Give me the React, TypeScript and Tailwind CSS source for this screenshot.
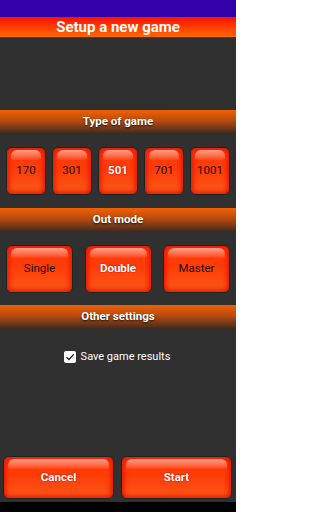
import React from 'react';

const gameTypes = ['170', '301', '501', '701', '1001'];
const outModes = ['Single', 'Double', 'Master'];

function GlossButton({
  label,
  selected,
  white,
  className,
}: {
  label: string;
  selected?: boolean;
  white?: boolean;
  className?: string;
}) {
  return (
    <button
      className={
        'relative flex items-center justify-center rounded-[6px] border border-[#1c2424] bg-[linear-gradient(to_bottom,#ff3a08_0%,#ff3c08_45%,#f85a18_100%)] shadow-[inset_0_0_5px_2px_#e81400] ' +
        (className ?? '')
      }
    >
      <span className="absolute left-[4px] right-[4px] top-[2px] h-[10px] rounded-t-[6px] rounded-b-[2px] bg-[linear-gradient(to_bottom,rgba(255,255,255,0.55),rgba(255,255,255,0.05))]" />
      <span
        className={
          selected
            ? 'relative text-[11.5px] font-bold text-white [text-shadow:0_0_2px_#c00000]'
            : white
            ? 'relative text-[11.5px] font-bold text-white [text-shadow:0_0_2px_#b00000]'
            : 'relative text-[11.5px] text-[#1a0a00]'
        }
      >
        {label}
      </span>
    </button>
  );
}

function SectionHeader({ title }: { title: string }) {
  return (
    <div className="flex h-[24px] items-center justify-center bg-[linear-gradient(to_bottom,#f06200_0%,#b84a10_45%,#3a2a20_100%)]">
      <span className="text-[11.5px] font-bold text-white [text-shadow:0_1px_2px_#201000]">{title}</span>
    </div>
  );
}

export default function App() {
  return (
    <div className="flex h-[512px] w-[236px] flex-col bg-[#303030] font-['Roboto',sans-serif]">
      {/* status bar */}
      <div className="h-[17px] bg-[#3300aa]" />

      {/* title */}
      <div className="flex h-[20px] items-center justify-center bg-[linear-gradient(to_bottom,#ff1000,#ff6a00)]">
        <span className="text-[15px] font-bold leading-none text-white">Setup a new game</span>
      </div>

      <div className="h-[73px] border-t border-[#3c3c3c] bg-[#303030]" />

      <SectionHeader title="Type of game" />
      <div className="flex h-[74px] items-center gap-[6px] px-[6px]">
        {gameTypes.map((t) => (
          <GlossButton key={t} label={t} selected={t === '501'} className="h-[48px] w-[40px]" />
        ))}
      </div>

      <SectionHeader title="Out mode" />
      <div className="flex h-[73px] items-center justify-between px-[6px]">
        {outModes.map((m) => (
          <GlossButton key={m} label={m} selected={m === 'Double'} className="h-[48px] w-[67px]" />
        ))}
      </div>

      <SectionHeader title="Other settings" />
      <div className="flex flex-1 flex-col">
        <div className="mt-[20px] flex items-center justify-center gap-[5px] pr-[2px]">
          <span className="flex h-[12px] w-[12px] items-center justify-center rounded-[2px] bg-white">
            <svg width="10" height="10" viewBox="0 0 10 10" fill="none">
              <path d="M1.5 5.2 L4 7.6 L8.6 2.4" stroke="#111" strokeWidth="1.3" />
            </svg>
          </span>
          <span className="text-[11px] text-white">Save game results</span>
        </div>

        <div className="mt-auto flex gap-[7px] pb-[3px] pl-[3px] pr-[4px]">
          <GlossButton label="Cancel" white className="h-[43px] flex-1" />
          <GlossButton label="Start" white className="h-[43px] flex-1" />
        </div>
      </div>

      {/* nav bar */}
      <div className="h-[10px] bg-black" />
    </div>
  );
}
